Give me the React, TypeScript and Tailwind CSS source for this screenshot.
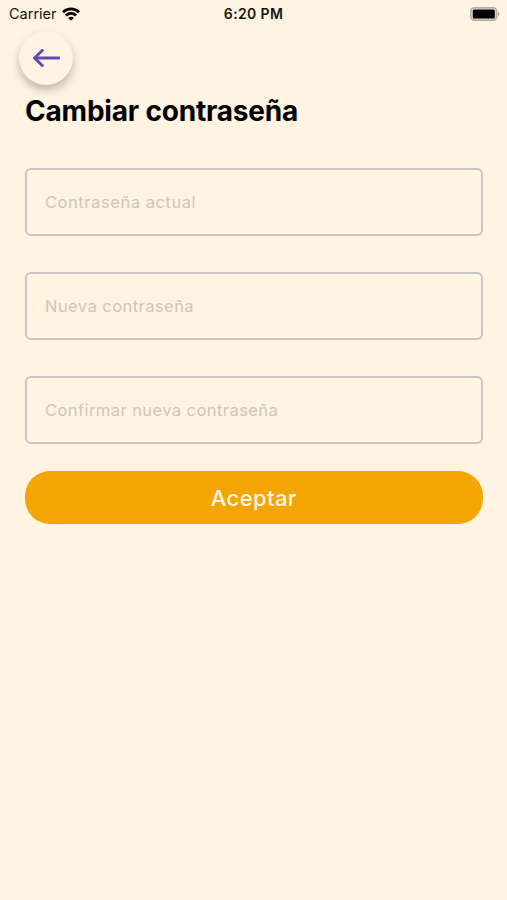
const fields = [
  { label: 'Contraseña actual', tracking: 'tracking-[0.56px]' },
  { label: 'Nueva contraseña', tracking: 'tracking-[0.45px]' },
  { label: 'Confirmar nueva contraseña', tracking: 'tracking-[0.43px]' },
];

function StatusBar() {
  return (
    <div className="grid h-7 grid-cols-3 items-center text-[14px] leading-7 text-[#16130f]">
      <div className="flex items-center gap-[5px] pl-[9px]">
        <span className="text-[14.5px]">Carrier</span>
        <svg width="18" height="14" viewBox="0 0 18 14" fill="none" stroke="#000" strokeWidth="2.7">
          <path d="M0.9 5.2C5.4 0.7 12.6 0.7 17.1 5.2" />
          <path d="M3.9 8.5C6.8 5.7 11.2 5.7 14.1 8.5" />
          <path d="M9 13.8L6.2 10.9C7.8 9.4 10.2 9.4 11.8 10.9Z" fill="#000" stroke="none" />
        </svg>
      </div>
      <div className="text-center font-semibold tracking-[0.35px]">6:20 PM</div>
      <div className="flex justify-end pr-[7px]">
        <svg width="30" height="14" viewBox="0 0 30 14">
          <rect x="0.8" y="0.8" width="26" height="12.4" rx="3.5" fill="#d9d0c4" stroke="#b5ada2" strokeWidth="1.4" />
          <rect x="2.8" y="2.5" width="22" height="9" rx="1.5" fill="#000" />
          <path d="M28 4.8C30 5.6 30 8.4 28 9.2Z" fill="#aaa399" />
        </svg>
      </div>
    </div>
  );
}

export default function App() {
  return (
    <main className="h-[900px] w-full overflow-hidden bg-[#fff3e2] font-['Inter','Liberation_Sans',sans-serif]">
      <StatusBar />
      <div className="px-[25px] pt-[3px]">
        <button
          aria-label="Volver"
          className="-ml-[6px] flex size-[54px] items-center justify-center rounded-full bg-[#fff3e4] shadow-[0_5px_9px_rgba(60,45,25,0.3)]"
        >
          <svg width="28" height="18" viewBox="0 0 28 18" fill="none" stroke="#5a4db0" strokeWidth="3">
            <path d="M26.8 9H2.5M10.3 1.5L2.5 9L10.3 16.5" strokeLinejoin="round" strokeLinecap="round" />
          </svg>
        </button>
        <h1 className="mt-[6px] h-10 whitespace-nowrap text-[28px] leading-10 font-bold tracking-[-0.2px] text-black">
          Cambiar contraseña
        </h1>
        <form className="mt-[36.5px] flex flex-col gap-[35.5px]">
          {fields.map(({ label, tracking }) => (
            <input
              key={label}
              type="text"
              placeholder={label}
              className={`h-[68.5px] w-[457.5px] rounded-[6px] border-2 border-[#c9c4c1] bg-transparent px-[18px] text-[16.5px] placeholder:text-[#cfc6b6] ${tracking}`}
            />
          ))}
          <button
            type="button"
            className="-mt-[9px] h-[53px] w-[457.5px] rounded-[25px] bg-[#f3a504] pt-[2px] text-[22px] font-medium tracking-[0.4px] text-[#fff6e5]"
          >
            Aceptar
          </button>
        </form>
      </div>
    </main>
  );
}
